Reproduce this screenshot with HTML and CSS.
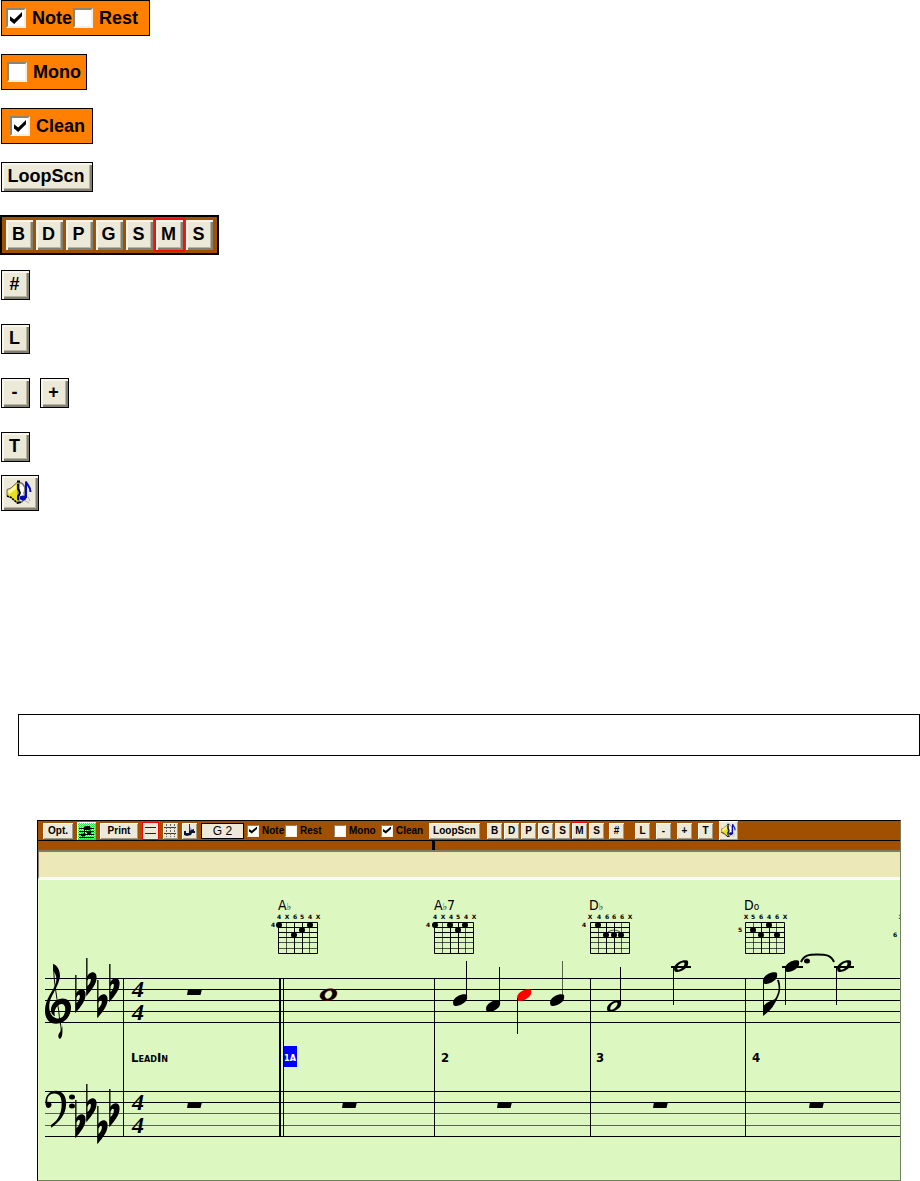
FILE: index.html
```html
<!DOCTYPE html>
<html lang="en">
<head>
    <meta charset="UTF-8">
    <meta name="viewport" content="width=device-width, initial-scale=1.0">
    <title>Notation Toolbar</title>
    <link rel="stylesheet" href="styles.css">
</head>
<body>
    <!-- shared shapes -->
    <svg class="defs" width="0" height="0" aria-hidden="true">
        <symbol id="speaker" viewBox="0 0 26 25">
            <path d="M13 2 C19 4 20 9 18 13 C20 17 18 22 13 23 Z" fill="#fff" stroke="#777" stroke-width="1.500"/>
            <path d="M1 9.500 L5 8 L12 1.500 V23.500 L5 17.500 L1 16 Z" fill="#e8e020" stroke="#666" stroke-width="1"/>
            <path d="M2 11 L10 5 V9 L3 14 Z" fill="#fffba0"/>
            <path d="M1 16 L5 17.500 L12 23.500" fill="none" stroke="#000" stroke-width="1.600" stroke-dasharray="2 1"/>
            <path d="M11 1.500 H14 M12 4 V9 Q16 13 12 16 V20 M11 23 L15 22" fill="none" stroke="#000" stroke-width="1.800"/>
            <path d="M22 17 L24 21 M18 20 L23 23" stroke="#aaa" stroke-width="1"/>
            <ellipse cx="17" cy="18" rx="3.300" ry="2.400" fill="#0008b8"/>
            <path d="M20 18 V1.500 C21 5 25 7 24.500 12" fill="none" stroke="#0008b8" stroke-width="2"/>
        </symbol>
        <symbol id="treble" viewBox="0 0 80 234">
            <path d="M25 2 C38 8 47 22 46 42 C43 65 26 91 19 107 C8 131 12 162 34 170 C54 174 64 158 62 137 C59 122 46 124 38 133 C30 142 27 152 31 164 C12 158 15 129 34 116 C54 102 80 111 80 136 C80 167 58 187 34 187 C11 187 0 169 0 148 C0 109 26 87 34 60 C38 40 30 30 25 22 Z"/>
            <path d="M27 8 C25 55 41 125 44 165 C46 184 52 198 49 216" fill="none" stroke="#000" stroke-width="3"/>
            <path d="M53 194 C55 216 53 230 46 234 C37 228 42 216 48 211 Z"/>
        </symbol>
        <symbol id="bass" viewBox="0 0 70 120">
            <path d="M4 52 C-6 23 12 0 34 0 C58 0 69 20 67 45 C66 76 46 100 20 118 L18 110 C42 96 53 72 53 42 C53 20 45 9 30 9 C14 9 5 22 8 37 C17 31 26 45 17 53 C12 57 7 56 4 52 Z"/>
        </symbol>
        <symbol id="flat" viewBox="0 0 32 114">
            <path d="M0 0 H4 V54 C8 45 16 42 22 43 C31 45 33 56 30 68 C27 82 16 95 3 112 L0 114 Z M4 68 V84 C10 80 15 70 14 62 C12 55 6 61 4 68 Z" fill-rule="evenodd"/>
        </symbol>
        <symbol id="rest" viewBox="0 0 15 6">
            <path d="M1 0 H15 L13.500 6 H0 Z"/>
        </symbol>
        <symbol id="head" viewBox="-8 -7 16 14">
            <path d="M-6.500 5 C-8 0 -5 -2 -2 -4 C1 -6 6 -6.500 7 -5 C7.500 -1 7 1 3 3.500 C0 5.500 -5 7 -6.500 5 Z"/>
        </symbol>
        <symbol id="half" viewBox="-8 -7 16 14">
            <path d="M-6.500 5 C-8 0 -5 -2 -2 -4 C1 -6 6 -6.500 7 -5 C7.500 -1 7 1 3 3.500 C0 5.500 -5 7 -6.500 5 Z M-3.500 3.500 C-1 5 4 0 3.500 -3 C1 -5 -5 0 -3.500 3.500 Z" fill-rule="evenodd"/>
        </symbol>
        <symbol id="fretgrid" viewBox="0 0 40 32">
            <path d="M0.500 0.500 H39.500 V31.500 H0.500 Z M16.500 0 V32 M24.500 0 V32 M0 5.500 H40 M0 10.500 H40 M0 15.500 H40" fill="none" stroke="#000"/>
            <path d="M8.500 0 V32 M31.500 0 V32 M0 20.500 H40 M0 26.500 H40" fill="none" stroke="#000" stroke-opacity=".65"/>
        </symbol>
    </svg>

    <div class="controls">
        <div class="swatch swatch-wide">
            <label class="check note"><input type="checkbox" checked>Note</label>
            <label class="check rest"><input type="checkbox">Rest</label>
        </div>
        <div class="swatch swatch-mono">
            <label class="check"><input type="checkbox">Mono</label>
        </div>
        <div class="swatch swatch-clean">
            <label class="check"><input type="checkbox" checked>Clean</label>
        </div>
        <button class="btn loop">LoopScn</button>
        <div class="strip">
            <button class="btn">B</button>
            <button class="btn">D</button>
            <button class="btn">P</button>
            <button class="btn">G</button>
            <button class="btn">S</button>
            <button class="btn active">M</button>
            <button class="btn">S</button>
        </div>
        <button class="btn">#</button>
        <button class="btn">L</button>
        <div class="pair">
            <button class="btn">-</button>
            <button class="btn">+</button>
        </div>
        <button class="btn text-btn">T</button>
        <button class="btn sound" aria-label="Play notes"><svg><use href="#speaker"/></svg></button>
    </div>

    <div class="note-box"></div>

    <div class="notation">
        <div class="toolbar">
            <div class="group tools">
                <button class="tool opt">Opt.</button>
                <button class="tool notation-icon" aria-label="Notation mode">
                    <svg viewBox="0 0 19 18">
                        <path d="M2 6.500 H17 M2 9.500 H17 M2 12.500 H17 M2 15.500 H17" stroke="#000"/>
                        <path d="M7.500 13 V5 H13 V10" fill="none" stroke="#000"/>
                        <path d="M8 4 H13 V8 H8 Z"/>
                        <ellipse cx="6" cy="13" rx="2.500" ry="1.500"/>
                        <ellipse cx="12" cy="10.500" rx="2.500" ry="1.500"/>
                    </svg>
                </button>
                <button class="tool print">Print</button>
                <button class="tool active" aria-label="Standard notation">
                    <svg viewBox="0 0 15 15"><path d="M2 4.500 H13 M2 10.500 H13" stroke="#222"/></svg>
                </button>
                <button class="tool" aria-label="Editable notation">
                    <svg viewBox="0 0 15 15">
                        <path d="M1 4.500 H13 M1 10.500 H13" stroke="#333"/>
                        <path d="M3.500 1 V14 M7.500 1 V14 M11.500 1 V14" stroke="#666" stroke-dasharray="2 1"/>
                    </svg>
                </button>
                <button class="tool" aria-label="Note roll">
                    <svg viewBox="0 0 15 15">
                        <path d="M7 3 L12 8 L7 9 Z" fill="#9a9aec"/>
                        <path d="M7.500 1 V9" stroke="#2020d0"/>
                        <path d="M2 8 H4 V10 L7 10 V8 L12 6 V8 H13 V10 H10 L9 12 L5 13 L2 12 Z" fill="#101030"/>
                    </svg>
                </button>
                <output class="readout">G 2</output>
            </div>
            <div class="group checks">
                <label class="check note"><input type="checkbox" checked>Note</label>
                <label class="check rest"><input type="checkbox">Rest</label>
                <label class="check mono"><input type="checkbox">Mono</label>
                <label class="check clean"><input type="checkbox" checked>Clean</label>
            </div>
            <button class="tool loop">LoopScn</button>
            <div class="group letters">
                <button class="tool">B</button>
                <button class="tool">D</button>
                <button class="tool">P</button>
                <button class="tool">G</button>
                <button class="tool">S</button>
                <button class="tool active">M</button>
                <button class="tool">S</button>
            </div>
            <button class="tool">#</button>
            <div class="group edit">
                <button class="tool">L</button>
                <button class="tool">-</button>
                <button class="tool">+</button>
                <button class="tool">T</button>
                <button class="tool sound" aria-label="Play notes"><svg><use href="#speaker"/></svg></button>
            </div>
        </div>
        <div class="timeline"><span class="marker"></span></div>
        <div class="lyrics"></div>

        <svg class="score" viewBox="0 0 862 300">
            <!-- staves -->
            <path class="line" d="M7 98.500 H862 M7 109.500 H862 M7 120.500 H862 M7 131.500 H862 M7 142.500 H862"/>
            <path class="line" d="M7 211.500 H862 M7 222.500 H862 M7 256.500 H862"/>
            <path class="line soft" d="M7 233.500 H862 M7 245.500 H862"/>

            <!-- bar lines -->
            <path class="line" d="M85.500 98 V257 M245.500 98 V257 M396.500 98 V257 M552.500 98 V257 M707.500 98 V257"/>
            <rect x="241" y="98" width="2" height="159"/>

            <!-- clefs and key signature -->
            <use href="#treble" x="7" y="82" width="26" height="78"/>
            <use href="#flat" x="37" y="95" width="11" height="38"/>
            <use href="#flat" x="48" y="78" width="11" height="38"/>
            <use href="#flat" x="59" y="100" width="11" height="38"/>
            <use href="#flat" x="71" y="84" width="11" height="38"/>
            <use href="#bass" x="7" y="210" width="22" height="39"/>
            <ellipse cx="34" cy="217" rx="3" ry="2.500"/>
            <ellipse cx="34" cy="226" rx="3" ry="2.500"/>
            <use href="#flat" x="37" y="220" width="11" height="38"/>
            <use href="#flat" x="48" y="204" width="11" height="38"/>
            <use href="#flat" x="59" y="226" width="11" height="38"/>
            <use href="#flat" x="71" y="209" width="11" height="38"/>
            <text class="meter" x="94" y="117">4</text>
            <text class="meter" x="94" y="140">4</text>
            <text class="meter" x="94" y="230">4</text>
            <text class="meter" x="94" y="253">4</text>

            <!-- rests -->
            <use href="#rest" x="149" y="109" width="15" height="6"/>
            <use href="#rest" x="149" y="222" width="15" height="6"/>
            <use href="#rest" x="304" y="222" width="15" height="6"/>
            <use href="#rest" x="459" y="222" width="15" height="6"/>
            <use href="#rest" x="615" y="222" width="15" height="6"/>
            <use href="#rest" x="771" y="222" width="15" height="6"/>

            <!-- bar 1 -->
            <path d="M282 116 C282 108 299 106 299 113 C299 122 282 123 282 116 Z M287 117 C289 122 296 116 294 112 C292 108 285 113 287 117 Z" fill-rule="evenodd" stroke="#800000" stroke-width=".5"/>

            <!-- bar 2 -->
            <use href="#head" x="414" y="113" width="16" height="14"/>
            <path class="line" d="M428.500 81 V117"/>
            <use href="#head" x="447" y="119" width="16" height="14"/>
            <path class="line" d="M461.500 87 V123"/>
            <g class="current">
                <use href="#head" x="478" y="108" width="16" height="14"/>
            </g>
            <path class="line" d="M479.500 118 V154"/>
            <use href="#head" x="511" y="113" width="16" height="14"/>
            <path class="line soft" d="M524.500 81 V117"/>

            <!-- bar 3 -->
            <use href="#half" x="568" y="119" width="16" height="14"/>
            <path class="line" d="M582.500 87 V123"/>
            <use href="#half" x="635" y="79" width="16" height="14"/>
            <path class="ledger" d="M633 87 H653"/>
            <path class="line" d="M635.500 88 V125"/>

            <!-- bar 4 -->
            <use href="#head" x="724" y="91" width="16" height="14"/>
            <path class="line" d="M725.500 100 V135"/>
            <path d="M725 127 C728 122 733 121 737 119 C742 111 741 106 739 100 H741 C744 110 741 116 737 123 C734 129 729 133 725 136 Z"/>
            <use href="#head" x="746" y="79" width="16" height="14"/>
            <path class="ledger" d="M744 87 H765"/>
            <path class="line" d="M747.500 88 V125"/>
            <ellipse cx="769" cy="81" rx="3" ry="2.500"/>
            <path class="tie" d="M763 82 C766 75 771 74.500 779 74.500 C788 74.500 793 75 796 82"/>
            <use href="#half" x="798" y="79" width="16" height="14"/>
            <path class="ledger" d="M796 87 H816"/>
            <path class="line" d="M798.500 88 V125"/>

            <!-- chords -->
            <text class="chord" x="240" y="30">A<tspan class="accidental">♭</tspan></text>
            <text class="fingering" x="241 249 257 264 272 280" y="39">4X654X</text>
            <text class="fingering" x="235" y="47">4</text>
            <use href="#fretgrid" x="240" y="42" width="40" height="32"/>
            <g class="dots">
                <circle cx="241" cy="45" r="3"/><circle cx="272" cy="45" r="3"/>
                <circle cx="264" cy="50" r="3"/><circle cx="256" cy="55" r="3"/>
            </g>

            <text class="chord" x="396" y="30">A<tspan class="accidental">♭</tspan>7</text>
            <text class="fingering" x="397 405 413 420 428 436" y="39">4X454X</text>
            <text class="fingering" x="390" y="47">4</text>
            <use href="#fretgrid" x="396" y="42" width="40" height="32"/>
            <g class="dots">
                <circle cx="397" cy="45" r="3"/><circle cx="412" cy="45" r="3"/>
                <circle cx="427" cy="45" r="3"/><circle cx="420" cy="50" r="3"/>
            </g>

            <text class="chord" x="551" y="30">D<tspan class="accidental">♭</tspan></text>
            <text class="fingering" x="552 561 569 576 584 592" y="39">X4666X</text>
            <text class="fingering" x="546" y="47">4</text>
            <use href="#fretgrid" x="552" y="42" width="40" height="32"/>
            <g class="dots">
                <circle cx="560" cy="45" r="3"/><circle cx="568" cy="55" r="3"/>
                <circle cx="576" cy="55" r="3"/><circle cx="583" cy="55" r="3"/>
            </g>
            <path class="line soft" d="M570 52 Q576 48 582 52"/>

            <text class="chord" x="706" y="30">D<tspan class="accidental">o</tspan></text>
            <text class="fingering" x="708 715 723 731 739 747" y="39">X5646X</text>
            <text class="fingering" x="702" y="52">5</text>
            <use href="#fretgrid" x="707" y="42" width="40" height="32"/>
            <g class="dots">
                <circle cx="715" cy="50" r="3"/><circle cx="731" cy="45" r="3"/>
                <circle cx="723" cy="55" r="3"/><circle cx="739" cy="55" r="3"/>
            </g>

            <text class="fingering" x="863" y="39">X</text>
            <text class="fingering" x="857" y="57">6</text>

            <!-- bar numbers -->
            <text class="bar-label" x="93" y="182">LeadIn</text>
            <rect x="246" y="166" width="13" height="21" fill="#0000ff"/>
            <text class="bar-label selected" x="246" y="181">1A</text>
            <text class="bar-label" x="403" y="182">2</text>
            <text class="bar-label" x="558" y="182">3</text>
            <text class="bar-label" x="714" y="182">4</text>
        </svg>
    </div>
</body>
</html>
```
FILE: styles.css
```css
* {
    box-sizing: border-box;
}

body {
    margin: 0;
    background: #fff;
    color: #000;
    font-family: "Liberation Sans", Arial, sans-serif;
}

button {
    display: flex;
    align-items: center;
    justify-content: center;
    margin: 0;
    padding: 0;
    border: 0;
    color: #000;
    background: #ece9d8;
    font-family: inherit;
    font-weight: bold;
}

.defs {
    position: absolute;
}

/* large controls */
.controls {
    display: flex;
    flex-direction: column;
    align-items: flex-start;
    font-size: 18px;
    font-weight: bold;
}

.swatch {
    display: flex;
    align-items: center;
    height: 36px;
    margin: 0 0 18px 1px;
    padding-left: 4px;
    background: #ff8000;
    border: 1px solid #000;
}

.swatch-wide { width: 149px; }
.swatch-mono { width: 86px; padding-left: 5px; }
.swatch-clean { width: 92px; padding-left: 8px; }

.check {
    display: flex;
    align-items: center;
    gap: 6px;
}

.swatch-wide .note { width: 67px; }

.check input {
    appearance: none;
    flex: none;
    width: 20px;
    height: 20px;
    margin: 0;
    background: #fff;
    border: 2px solid;
    border-color: #8a8470 #f4f1e4 #f4f1e4 #8a8470;
}

.check input:checked::before {
    content: "";
    display: block;
    width: 12px;
    height: 12px;
    margin: 2px;
    background: #000;
    clip-path: polygon(0 35%, 35% 62%, 100% 0, 100% 35%, 35% 100%, 0 70%);
}

.btn {
    width: 29px;
    height: 30px;
    margin: 0 0 24px 1px;
    padding: 0 2px 2px 0;
    border: 1px solid #000;
    box-shadow: inset 2px 2px 0 #f8f6ec, inset -2px -2px 0 #827e70, inset -3px -3px 0 #b8b4a2;
    font-size: 18px;
}

.btn.loop {
    width: 92px;
    margin-bottom: 23px;
}

.strip {
    display: flex;
    gap: 3px;
    width: 219px;
    height: 40px;
    margin-bottom: 15px;
    padding: 3px 4px;
    background: #a05000;
    border: 2px solid #000;
}

.strip .btn {
    width: 27px;
    margin: 0;
    border: 0;
}

.strip .active {
    outline: 2px solid #f01010;
}

.pair {
    display: flex;
    gap: 9px;
}

.btn.text-btn {
    margin-bottom: 13px;
}

.btn.sound {
    width: 38px;
    height: 36px;
    margin-bottom: 0;
}

.btn.sound svg {
    width: 26px;
    height: 25px;
}

.note-box {
    height: 42px;
    margin: 203px 0 64px 18px;
    border: 1px solid #000;
}

/* notation window */
.notation {
    margin: 0 19px 0 37px;
    background: #dcf8c0;
    border: 1px solid #000;
    border-right-color: #708060;
    border-bottom-color: #708060;
}

.toolbar {
    display: flex;
    align-items: center;
    height: 20px;
    padding-left: 5px;
    background: #a05000;
    border-bottom: 1px solid #000;
    font-size: 10px;
    font-weight: bold;
}

.group {
    display: flex;
    align-items: center;
}

.tools { gap: 4px; }
.letters { gap: 2px; margin: 0 5px 0 7px; }
.edit { gap: 6px; margin-left: 11px; }

.tool {
    flex: none;
    width: 15px;
    height: 16px;
    box-shadow: inset 1px 1px 0 #fff, inset -1px -1px 0 #a09c8c;
    font-size: 10px;
}

.tool svg {
    width: 15px;
    height: 15px;
}

.tool.opt { width: 30px; }
.tool.print { width: 38px; }
.tool.loop { width: 51px; }

.tools .active {
    width: 17px;
    height: 18px;
    border: 1px solid #f00;
    box-shadow: none;
}

.letters .active {
    outline: 1px solid #f00;
}

.notation-icon {
    width: 19px;
    height: 18px;
    background: repeating-conic-gradient(#20e840 0 25%, #d8ffd8 0 50%) 0 0 / 2px 2px;
}

.notation-icon svg {
    width: 19px;
    height: 18px;
}

.tool.sound {
    width: 19px;
    height: 19px;
}

.readout {
    width: 43px;
    height: 16px;
    background: #ece9d8;
    border: 1px solid #000;
    font-size: 12px;
    font-weight: normal;
    line-height: 15px;
    text-align: center;
}

.checks {
    margin-left: 3px;
}

.toolbar .check { gap: 3px; }
.toolbar .note { width: 38px; }
.toolbar .rest { width: 49px; }
.toolbar .mono { width: 47px; }
.toolbar .clean { width: 48px; }

.toolbar .check input {
    width: 12px;
    height: 12px;
    border-width: 1px;
}

.toolbar .check input:checked::before {
    width: 8px;
    height: 7px;
    margin: 1px;
}

.timeline {
    display: flex;
    justify-content: center;
    height: 9px;
    padding-right: 72px;
    background: #a05000;
}

.marker {
    width: 3px;
    background: #000;
}

.lyrics {
    height: 30px;
    background: #ece8b8;
    border-top: 2px solid #807c68;
    border-left: 1px solid #807c68;
    border-bottom: 3px solid #fbfbf6;
}

/* score */
.score {
    display: block;
    width: 100%;
}

.line {
    fill: none;
    stroke: #000;
}

.soft {
    stroke-opacity: .6;
}

.ledger {
    stroke: #000;
    stroke-width: 2;
}

.tie {
    fill: none;
    stroke: #000;
    stroke-width: 2;
}

.current {
    fill: #f00;
}

.meter {
    font-family: "Liberation Serif", serif;
    font-size: 24px;
    font-style: italic;
    font-weight: bold;
}

.chord {
    font-family: "Liberation Sans Narrow", "DejaVu Sans Condensed", sans-serif;
    font-size: 14px;
}

.accidental {
    font-size: 10px;
}

.fingering {
    font-family: "DejaVu Sans", sans-serif;
    font-size: 6px;
    font-weight: bold;
    text-anchor: middle;
}

.bar-label {
    font-family: "Liberation Sans Narrow", "DejaVu Sans Condensed", sans-serif;
    font-size: 13px;
    font-weight: bold;
    font-variant: small-caps;
}

.selected {
    fill: #fff;
    font-size: 9px;
}
```
